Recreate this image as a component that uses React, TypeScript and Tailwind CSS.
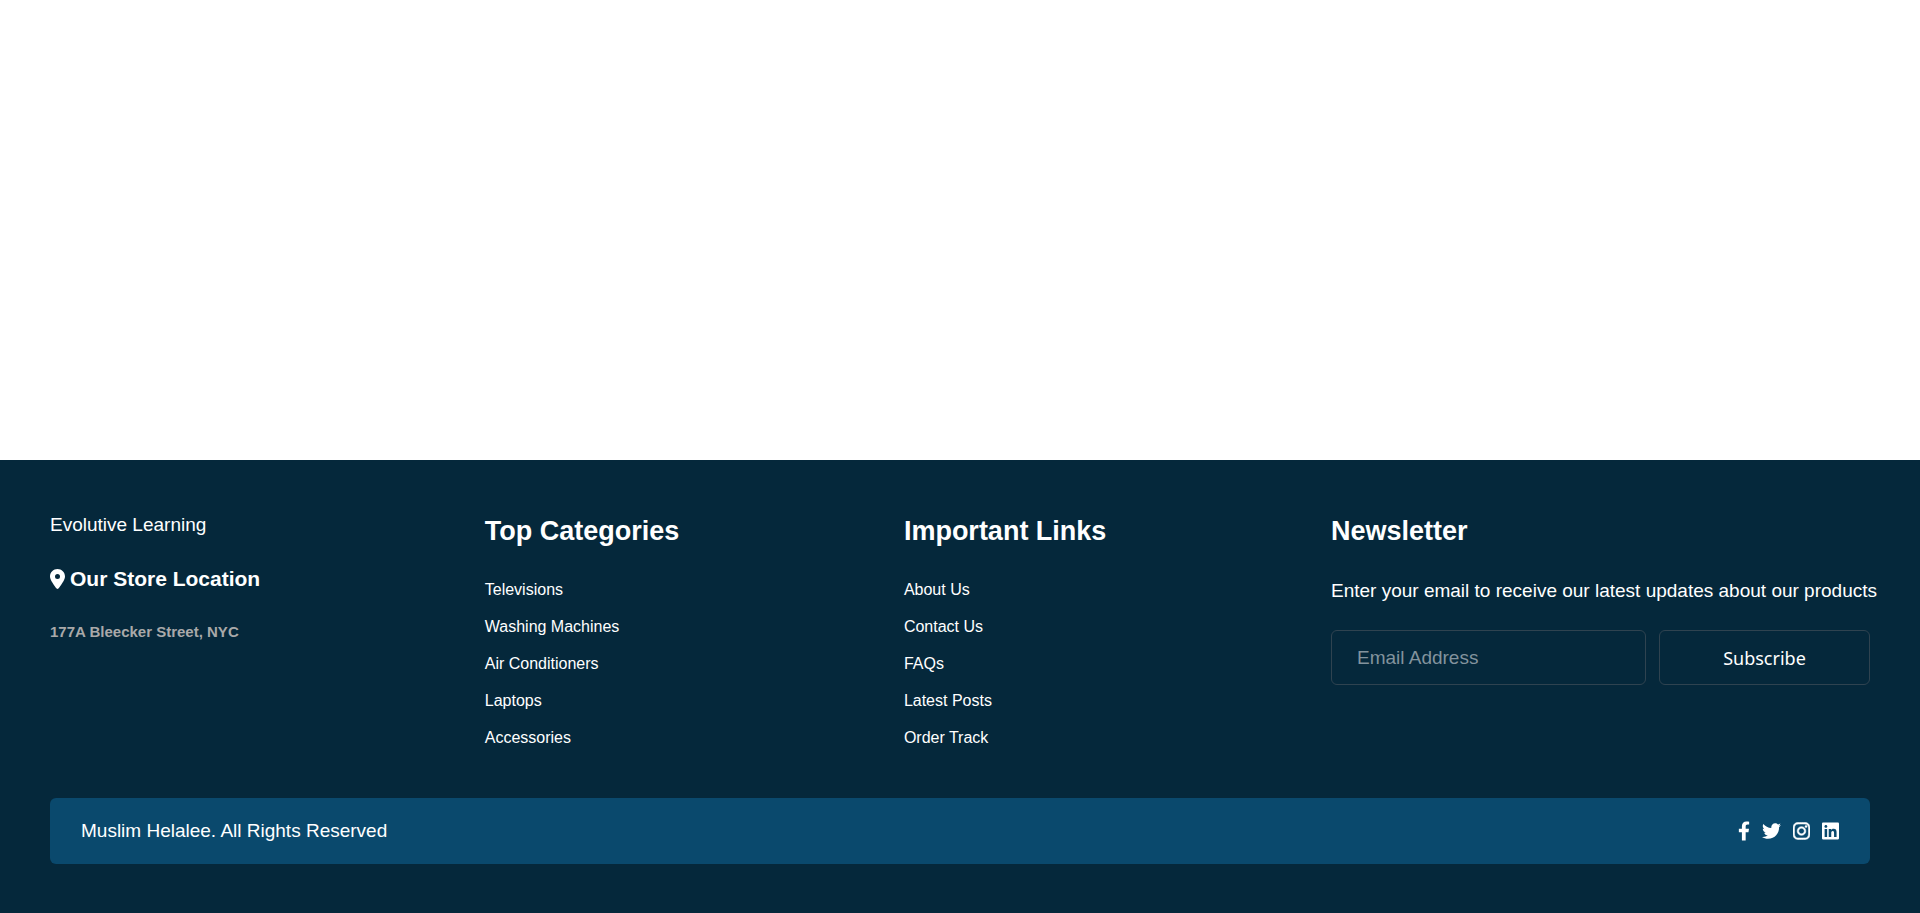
import type { ReactNode } from "react";
import { FaFacebookF, FaTwitter, FaInstagram, FaLinkedin } from "react-icons/fa";
import { FaLocationDot } from "react-icons/fa6";

function LinkColumn({ title, links }: { title: string; links: string[] }) {
  return (
    <nav aria-label={title} className="pt-1">
      <h2 className="mb-[34px] text-[27px] leading-8 font-bold">{title}</h2>
      <ul className="flex flex-col gap-[19px]">
        {links.map((link) => (
          <li key={link} className="text-base leading-[18px]">
            <a href="#">{link}</a>
          </li>
        ))}
      </ul>
    </nav>
  );
}

function SocialLink({ label, children }: { label: string; children: ReactNode }) {
  return (
    <a href="#" aria-label={label}>
      {children}
    </a>
  );
}

export default function App() {
  return (
    <div className="flex min-h-screen flex-col bg-white font-['Liberation_Sans',Arial,sans-serif] text-white">
      <main className="flex-1" />
      <footer className="bg-[#05283b] px-[50px] pt-[51px] pb-[49px]">
        <div className="flex justify-between">
          <div className="pt-[3px]">
            <p className="text-[19px] leading-[22px]">Evolutive Learning</p>
            <h3 className="mt-[31px] flex items-center gap-[5px] text-[21px] leading-6 font-bold">
              <FaLocationDot className="h-5 w-[15px]" />
              Our Store Location
            </h3>
            <p className="mt-8 text-[15px] leading-[18px] font-bold text-[#a9a9a9]">177A Bleecker Street, NYC</p>
          </div>
          <LinkColumn
            title="Top Categories"
            links={["Televisions", "Washing Machines", "Air Conditioners", "Laptops", "Accessories"]}
          />
          <LinkColumn
            title="Important Links"
            links={["About Us", "Contact Us", "FAQs", "Latest Posts", "Order Track"]}
          />
          <section className="w-[539px] pt-1">
            <h2 className="mb-[33px] text-[27px] leading-8 font-bold">Newsletter</h2>
            <p className="text-[19px] leading-[22px] whitespace-nowrap">
              <label htmlFor="email">Enter your email to receive our latest updates about our products</label>
            </p>
            <form className="mt-7 flex gap-[13px]">
              <input
                id="email"
                type="email"
                placeholder="Email Address"
                className="h-[55px] w-[315px] rounded-md border border-[#2f4350] bg-transparent px-[25px] text-[19px] placeholder:text-[#82939d]"
              />
              <button
                type="button"
                className="h-[55px] flex-1 rounded-md border border-[#2f4350] font-['Noto_Sans',sans-serif] text-lg"
              >
                Subscribe
              </button>
            </form>
          </section>
        </div>
        <div className="mt-[51px] flex h-[66px] items-center justify-between rounded-md bg-[#0a496d] px-[31px]">
          <p className="text-[19px] leading-6">Muslim Helalee. All Rights Reserved</p>
          <div className="flex items-center gap-3">
            <SocialLink label="Facebook">
              <FaFacebookF className="h-5 w-3" />
            </SocialLink>
            <SocialLink label="Twitter">
              <FaTwitter className="h-5 w-[19px]" />
            </SocialLink>
            <SocialLink label="Instagram">
              <FaInstagram className="h-5 w-[17px]" strokeWidth={14} />
            </SocialLink>
            <SocialLink label="LinkedIn">
              <FaLinkedin className="h-5 w-[17px]" />
            </SocialLink>
          </div>
        </div>
      </footer>
    </div>
  );
}
